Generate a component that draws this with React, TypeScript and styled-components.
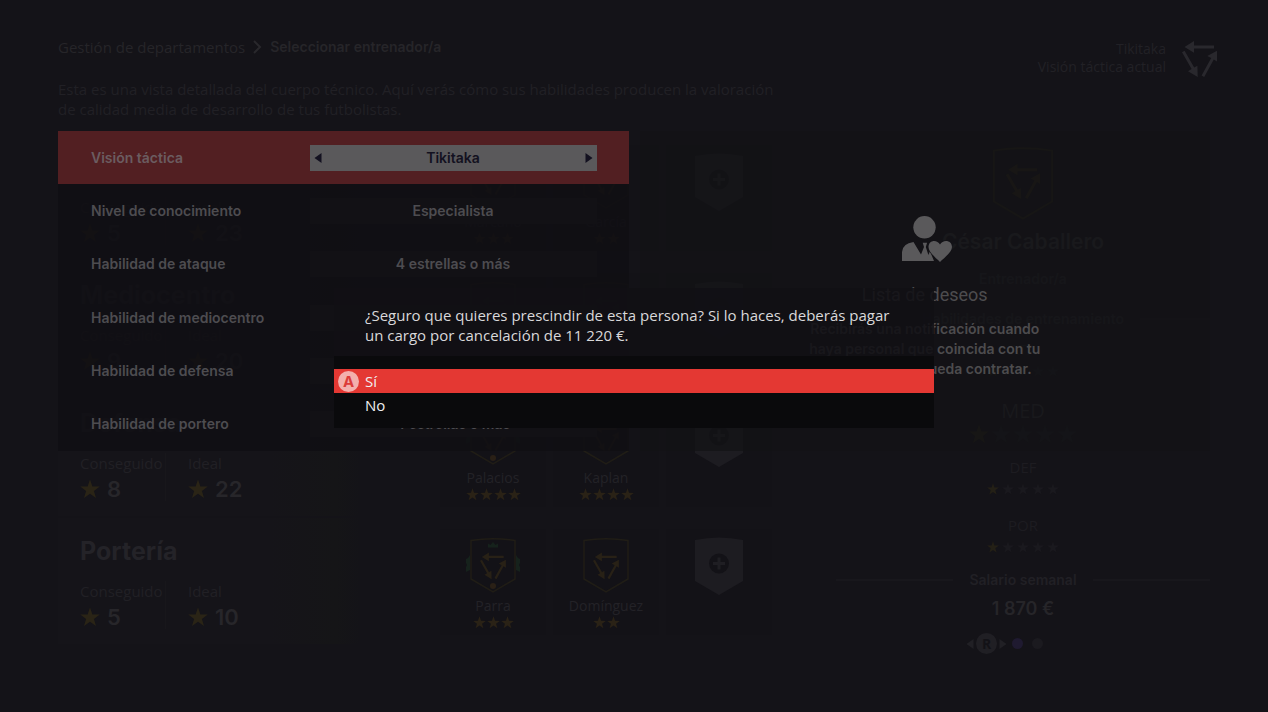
import React from "react";
import styled, { createGlobalStyle, css } from "styled-components";

const bodyFont = `"Open Sans", "Noto Sans", sans-serif`;
const strongFont = `Inter, "Liberation Sans", sans-serif`;

const GlobalStyle = createGlobalStyle`
  * { box-sizing: border-box; }
  html, body { margin: 0; min-height: 100%; background: #141318; }
  body { font-family: ${bodyFont}; font-size: 15px; line-height: 20px; }
  h1, h2, h3, p, dl, dd, dt { margin: 0; padding: 0; font-size: inherit; font-weight: inherit; }
  button { font: inherit; color: inherit; border: 0; padding: 0; background: none; cursor: pointer; }
  a { color: inherit; text-decoration: none; }
  svg { display: block; }
`;

const strongText = css`
  font-family: ${strongFont};
  font-size: 14px;
  font-weight: 600;
`;

const Screen = styled.div`
  position: relative;
  min-height: 100vh;
  overflow: hidden;
  padding-bottom: 40px;
`;

/* ---------- Header ---------- */

const Header = styled.header`
  display: flex;
  justify-content: space-between;
  padding: 37px 50px 15px 58px;
`;

const Crumbs = styled.nav`
  display: flex;
  align-items: center;
  gap: 8px;
  color: #262529;
`;

const CurrentCrumb = styled.h1`
  ${strongText}
`;

const Intro = styled.p`
  max-width: 720px;
  margin-top: 22px;
  color: #212025;
`;

const Vision = styled.div`
  display: flex;
  align-items: flex-start;
  gap: 16px;
  padding-top: 3px;
  text-align: right;
  font-size: 14px;
  line-height: 18px;
  color: #222126;
`;

const VisionIcon = styled.span`
  padding-top: 1px;
  color: #29282d;
`;

/* ---------- Departments ---------- */

const Main = styled.main`
  display: grid;
  grid-template-columns: 382px minmax(0, 1fr) 374px;
  padding: 0 58px;
`;

const Departments = styled.section`
  display: flex;
  flex-direction: column;
  gap: 2px;
  max-width: 302px;
`;

const Department = styled.article`
  height: 126px;
  padding: 19px 22px 0;
  background: linear-gradient(90deg, #151419 70%, #151517 92%, #141318 100%);
`;

const DepartmentName = styled.h2`
  font-family: ${strongFont};
  font-size: 25px;
  font-weight: 700;
  line-height: 28px;
  color: #242328;
`;

const Totals = styled.dl`
  display: flex;
  margin-top: 16px;
`;

const Total = styled.div`
  width: 86px;
  color: #212025;

  & + & {
    margin-left: 22px;
  }

  &:first-child {
    border-right: 1px solid #18171b;
  }
`;

const TotalValue = styled.dd`
  display: flex;
  align-items: center;
  gap: 7px;
  margin-top: 4px;
  font-family: ${strongFont};
  font-size: 22px;
  font-weight: 600;
  line-height: 24px;
  color: #27262a;
`;

const Squad = styled.section`
  display: grid;
  grid-template-columns: repeat(3, 106px);
  grid-auto-rows: 106px;
  gap: 22px 7px;
  padding-top: 11px;
`;

const Tile = styled.article`
  display: flex;
  flex-direction: column;
  align-items: center;
  padding-top: 8px;
  background: #131217;
`;

const TileName = styled.h3`
  font-size: 14px;
  line-height: 21px;
  color: #232227;
`;

const StarRow = styled.span<{ $gap: number }>`
  display: flex;
  gap: ${(p) => p.$gap}px;
`;

/* ---------- Coach ---------- */

const Coach = styled.aside`
  display: flex;
  flex-direction: column;
  align-items: center;
  padding-top: 12px;
  color: #212025;
`;

const CoachName = styled.h2`
  margin-top: 8px;
  font-family: ${strongFont};
  font-size: 21px;
  font-weight: 600;
  line-height: 28px;
  color: #29282d;
`;

const CoachRole = styled.p`
  ${strongText}
  margin-top: 13px;
`;

const Divider = styled.h3<{ $top: number }>`
  ${strongText}
  display: flex;
  align-items: center;
  gap: 16px;
  align-self: stretch;
  margin-top: ${(p) => p.$top}px;

  &::before,
  &::after {
    content: "";
    flex: 1;
    height: 2px;
    background: #18171c;
  }
`;

const Skill = styled.div<{ $large?: boolean; $top: number }>`
  display: flex;
  flex-direction: column;
  align-items: center;
  gap: 6px;
  margin-top: ${(p) => p.$top}px;
  color: #1d1c21;

  ${(p) =>
    p.$large &&
    css`
      gap: 1px;
      font-size: 20px;
      line-height: 24px;
      color: #29282d;
    `}
`;

const Salary = styled.p`
  margin-top: 6px;
  font-family: ${strongFont};
  font-size: 18px;
  font-weight: 600;
  line-height: 26px;
  color: #262529;
`;

const Pager = styled.div`
  display: flex;
  align-items: center;
  gap: 2px;
  margin: 11px 37px 0 0;
  color: #212025;
`;

const StickButton = styled.span`
  width: 21px;
  height: 21px;
  border-radius: 50%;
  background: #201f24;
  color: #131217;
  font-size: 14px;
  font-weight: 700;
  line-height: 21px;
  text-align: center;
`;

const PageDot = styled.button<{ $active?: boolean }>`
  width: 11px;
  height: 11px;
  margin-left: ${(p) => (p.$active ? 3 : 7)}px;
  border-radius: 50%;
  background: ${(p) => (p.$active ? "#1f1a30" : "#1b1a1f")};
`;

/* ---------- Search overlay ---------- */

const SearchLayer = styled.div`
  position: absolute;
  inset: 0;
  display: grid;
  grid-template-columns: 1fr 1fr;
  gap: 11px;
  align-items: start;
  padding: 131px 58px 0;
`;

const Filters = styled.form`
  display: flex;
  flex-direction: column;
  height: 320px;
  background: rgba(16, 15, 19, 0.88);
`;

const FilterRow = styled.div<{ $active?: boolean }>`
  ${strongText}
  flex: 1;
  display: flex;
  align-items: center;
  justify-content: space-between;
  padding: 0 32px 0 33px;
  color: ${(p) => (p.$active ? "#6b5c60" : "#4d4c50")};
  background: ${(p) => (p.$active ? "#521f22" : "transparent")};
`;

const Stepper = styled.div<{ $active?: boolean }>`
  display: flex;
  align-items: center;
  justify-content: space-between;
  width: 287px;
  height: 26px;
  padding: 0 4px;
  color: ${(p) => (p.$active ? "#131120" : "#4d4c50")};
  background: ${(p) => (p.$active ? "#5a595b" : "#121115")};
`;

const StepValue = styled.output`
  flex: 1;
  text-align: center;
`;

const Wishlist = styled.section`
  display: flex;
  flex-direction: column;
  align-items: center;
  height: 320px;
  padding-top: 85px;
  text-align: center;
  color: #4d4c4e;
  background: rgba(19, 18, 22, 0.7);
`;

const WishlistTitle = styled.h2`
  margin-top: 19px;
  font-family: Roboto, sans-serif;
  font-size: 18px;
  line-height: 28px;
`;

const WishlistText = styled.p`
  ${strongText}
  max-width: 240px;
  margin-top: 10px;
`;

/* ---------- Confirmation ---------- */

const DialogLayer = styled.div`
  position: absolute;
  inset: 0;
  display: flex;
  align-items: center;
  justify-content: center;
  padding-top: 4px;
`;

const Dialog = styled.div`
  width: 600px;
  max-width: 100%;
`;

const Question = styled.p`
  padding: 17px 31px 11px;
  color: #d9d8da;
  background: rgba(17, 16, 20, 0.88);
`;

const Options = styled.div`
  display: flex;
  flex-direction: column;
  padding: 13px 0 11px;
  background: #0a0a0c;
`;

const Option = styled.button<{ $selected?: boolean }>`
  display: flex;
  align-items: center;
  height: 24px;
  padding-left: ${(p) => (p.$selected ? 4 : 31)}px;
  text-align: left;
  color: #f0eff0;
  background: ${(p) => (p.$selected ? "#e43833" : "transparent")};
`;

const ButtonHint = styled.span`
  width: 21px;
  height: 21px;
  margin-right: 6px;
  border-radius: 50%;
  background: #f3b0ad;
  color: #dc3c39;
  font-family: ${strongFont};
  font-weight: 700;
  line-height: 21px;
  text-align: center;
`;

/* ---------- Drawings ---------- */

const Star = ({ size, color }: { size: number; color: string }) => (
  <svg width={size} height={size} viewBox="0 0 20 20" aria-hidden="true">
    <path
      fill={color}
      d="M10 .5l2.4 6.9 7.3.1-5.8 4.5 2.1 7-6-4.2-6 4.2 2.1-7L.3 7.5l7.3-.1z"
    />
  </svg>
);

const TacticPaths = () => (
  <>
    <path fill="currentColor" d="M2.5 6 12 0v4.5h20v3H12v4.2z" />
    <path fill="currentColor" d="M15.7 36 6 30.2l3.6-2.1L0 11.3l2.6-1.5 9.6 16.8 3.2-1.8z" />
    <path fill="currentColor" d="M35 9.7v10.8l-3.2-1.9L22.2 36l-2.6-1.5 9.6-17.4-3.9-2.1z" />
  </>
);

const Triangle = ({ left }: { left?: boolean }) => (
  <svg width="8" height="12" viewBox="0 0 8 12" aria-hidden="true">
    <path fill="currentColor" d={left ? "M7.5 1v10L.5 6z" : "M.5 1v10l7-5z"} />
  </svg>
);

const Badge = ({ gold, arrows, laurel, large }: {
  gold: string; arrows: string; laurel?: boolean; large?: boolean;
}) => (
  <svg
    width={large ? 62 : 54}
    height={large ? 74 : 58}
    viewBox={large ? "4 0 46 56" : "0 0 54 58"}
    aria-hidden="true"
  >
    <path d="M5 3.500Q27-.2 49 3.500V42L27 55 5 42z" fill="none" stroke={gold} strokeWidth="1.500" />
    <g transform={large ? "translate(14 13.500) scale(.74)" : "translate(14 15.500) scale(.74)"} color={arrows}>
      <TacticPaths />
    </g>
    {laurel && (
      <>
        <path fill="#16221c" d="M22 10.500V6.500l2.500 1.500L27 5l2.500 3L32 6.500v4z" />
        <path fill="#16221c" d="M4 18v15l-4 2v-5l1-2-1-2v-4l2-1zM50 18v15l4 2v-5l-1-2 1-2v-4l-2-1z" />
        <circle cx="27" cy="49" r="3" fill="#2a2016" />
      </>
    )}
  </svg>
);

const EmptyBadge = () => (
  <svg width="54" height="58" viewBox="0 0 54 58" aria-hidden="true">
    <path fill="#1d1c21" d="M3 3Q27-2 51 3v41L27 58 3 44z" />
    <circle cx="27" cy="26.500" r="10" fill="#131217" />
    <path stroke="#1f1e23" strokeWidth="3" d="M27 20.500v12M21 26.500h12" />
  </svg>
);

const Chevron = () => (
  <svg width="9" height="14" viewBox="0 0 9 14" aria-hidden="true">
    <path d="M1 1l6 6-6 6" fill="none" stroke="#29282c" strokeWidth="2" />
  </svg>
);

const PersonHeart = () => (
  <svg width="55" height="46" viewBox="-5 0 55 46" aria-hidden="true">
    <g fill="#5a595b">
      <circle cx="22.500" cy="11.300" r="11.200" />
      <path d="M0 45V36Q.5 27.500 11.500 26L19 38.500 22 31l-1.300-4.200h4.400L23.800 31l2.600 8L28 35q1.500 4 4 10z" />
      <path
        stroke="#131217"
        strokeWidth="1.500"
        paintOrder="stroke"
        d="M38 46C33.500 41.500 26.500 36 26.500 31c0-7 8.500-8 11.500-2.500C41 23 50 24 50 31c0 5-7.500 10.500-12 15z"
      />
    </g>
  </svg>
);

/* ---------- Data ---------- */

const departments = [
  { name: "Ataque", got: 5, ideal: 23 },
  { name: "Mediocentro", got: 9, ideal: 20 },
  { name: "Defensa", got: 8, ideal: 22 },
  { name: "Portería", got: 5, ideal: 10 },
];

type Member = { name: string; stars: number; laurel?: boolean } | null;

const squad: Member[] = [
  { name: "Marcano", stars: 3 },
  { name: "García", stars: 2 },
  null,
  { name: "", stars: 0 },
  { name: "", stars: 0 },
  null,
  { name: "Palacios", stars: 4, laurel: true },
  { name: "Kaplan", stars: 4 },
  null,
  { name: "Parra", stars: 3, laurel: true },
  { name: "Domínguez", stars: 2 },
  null,
];

const skills = [
  { label: "ATA", top: 10 },
  { label: "MED", top: 22, large: true },
  { label: "DEF", top: 13 },
  { label: "POR", top: 20 },
];

const filters = [
  { label: "Visión táctica", value: "Tikitaka" },
  { label: "Nivel de conocimiento", value: "Especialista" },
  { label: "Habilidad de ataque", value: "4 estrellas o más" },
  { label: "Habilidad de mediocentro", value: "" },
  { label: "Habilidad de defensa", value: "" },
  { label: "Habilidad de portero", value: "4 estrellas o más" },
];

const Rating = ({ value, large }: { value: number; large?: boolean }) => (
  <StarRow $gap={large ? 2 : 3}>
    {[1, 2, 3, 4, 5].map((n) => (
      <Star key={n} size={large ? 20 : 12} color={n <= value ? "#242016" : "#1a191e"} />
    ))}
  </StarRow>
);

export default function App() {
  return (
    <>
      <GlobalStyle />
      <Screen>
        <Header>
          <div>
            <Crumbs aria-label="Ruta">
              <a href="#departamentos">Gestión de departamentos</a>
              <Chevron />
              <CurrentCrumb>Seleccionar entrenador/a</CurrentCrumb>
            </Crumbs>
            <Intro>
              Esta es una vista detallada del cuerpo técnico. Aquí verás cómo sus habilidades
              producen la valoración de calidad media de desarrollo de tus futbolistas.
            </Intro>
          </div>
          <Vision>
            <div>
              <p>Tikitaka</p>
              <p>Visión táctica actual</p>
            </div>
            <VisionIcon>
              <svg width="36" height="36" viewBox="0 0 36 36" aria-hidden="true"><TacticPaths /></svg>
            </VisionIcon>
          </Vision>
        </Header>

        <Main>
          <Departments>
            {departments.map((d) => (
              <Department key={d.name}>
                <DepartmentName>{d.name}</DepartmentName>
                <Totals>
                  <Total>
                    <dt>Conseguido</dt>
                    <TotalValue><Star size={20} color="#2a2416" />{d.got}</TotalValue>
                  </Total>
                  <Total>
                    <dt>Ideal</dt>
                    <TotalValue><Star size={20} color="#2a2416" />{d.ideal}</TotalValue>
                  </Total>
                </Totals>
              </Department>
            ))}
          </Departments>

          <Squad>
            {squad.map((m, i) => (
              <Tile key={i}>
                {m ? (
                  <>
                    <Badge gold="#201d16" arrows="#282116" laurel={m.laurel} />
                    <TileName>{m.name}</TileName>
                    <StarRow $gap={1}>
                      {Array.from({ length: m.stars }, (_, n) => (
                        <Star key={n} size={13} color="#2a2216" />
                      ))}
                    </StarRow>
                  </>
                ) : (
                  <EmptyBadge />
                )}
              </Tile>
            ))}
          </Squad>

          <Coach>
            <Badge gold="#221e16" arrows="#262016" large />
            <CoachName>César Caballero</CoachName>
            <CoachRole>Entrenador/a</CoachRole>
            <Divider $top={20}>Habilidades de entrenamiento</Divider>
            {skills.map((s) => (
              <Skill key={s.label} $large={s.large} $top={s.top}>
                <span>{s.label}</span>
                <Rating value={1} large={s.large} />
              </Skill>
            ))}
            <Divider $top={17}>Salario semanal</Divider>
            <Salary>1 870 €</Salary>
            <Pager>
              <Triangle left />
              <StickButton>R</StickButton>
              <Triangle />
              <PageDot $active aria-label="Página 1" />
              <PageDot aria-label="Página 2" />
            </Pager>
          </Coach>
        </Main>

        <SearchLayer>
          <Filters>
            {filters.map((f, i) => (
              <FilterRow key={f.label} $active={i === 0}>
                <label htmlFor={`filter-${i}`}>{f.label}</label>
                <Stepper $active={i === 0}>
                  {i === 0 && <button type="button" aria-label="Anterior"><Triangle left /></button>}
                  <StepValue id={`filter-${i}`}>{f.value}</StepValue>
                  {i === 0 && <button type="button" aria-label="Siguiente"><Triangle /></button>}
                </Stepper>
              </FilterRow>
            ))}
          </Filters>
          <Wishlist>
            <PersonHeart />
            <WishlistTitle>Lista de deseos</WishlistTitle>
            <WishlistText>
              Recibirás una notificación cuando haya personal que coincida con tu búsqueda y se
              pueda contratar.
            </WishlistText>
          </Wishlist>
        </SearchLayer>

        <DialogLayer>
          <Dialog role="dialog" aria-modal="true" aria-labelledby="question">
            <Question id="question">
              ¿Seguro que quieres prescindir de esta persona? Si lo haces, deberás pagar un cargo
              por cancelación de 11 220 €.
            </Question>
            <Options>
              <Option type="button" $selected><ButtonHint aria-hidden="true">A</ButtonHint>Sí</Option>
              <Option type="button">No</Option>
            </Options>
          </Dialog>
        </DialogLayer>
      </Screen>
    </>
  );
}
